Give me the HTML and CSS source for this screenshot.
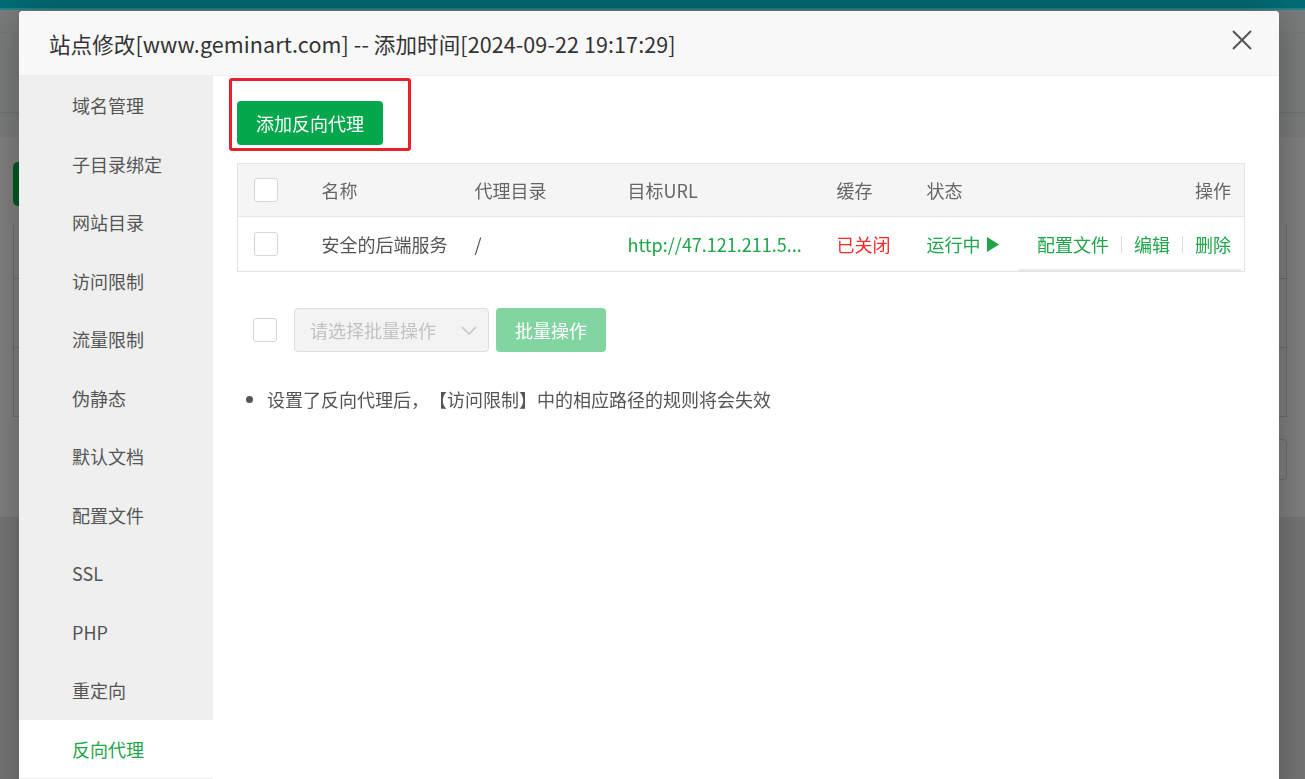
FILE: index.html
```html
<!DOCTYPE html>
<html lang="zh-CN">
<head>
<meta charset="utf-8">
<title>站点修改</title>
<link rel="stylesheet" href="styles.css">
</head>
<body>
<div class="page">
  <div class="topbar"></div>
  <div class="page-head">
    <div class="head-line"></div>
  </div>
  <div class="page-panel">
    <div class="bg-btn"></div>
    <div class="bg-table">
      <div class="bg-row bg-row-head"><span class="bg-text">三:</span></div>
      <div class="bg-row"><span class="bg-green">36</span></div>
      <div class="bg-row"><span class="bg-green">36</span></div>
    </div>
    <div class="bg-input"></div>
  </div>
</div>

<div class="modal">
  <div class="modal-head">
    <div class="modal-title">站点修改[www.geminart.com] -- 添加时间[2024-09-22 19:17:29]</div>
    <svg class="modal-close" width="20" height="20" viewBox="0 0 20 20"><path d="M1 1L19 19M19 1L1 19" stroke="#555" stroke-width="2" fill="none"/></svg>
  </div>
  <div class="modal-body">
    <ul class="side">
      <li class="side-item">域名管理</li>
      <li class="side-item">子目录绑定</li>
      <li class="side-item">网站目录</li>
      <li class="side-item">访问限制</li>
      <li class="side-item">流量限制</li>
      <li class="side-item">伪静态</li>
      <li class="side-item">默认文档</li>
      <li class="side-item">配置文件</li>
      <li class="side-item">SSL</li>
      <li class="side-item">PHP</li>
      <li class="side-item">重定向</li>
      <li class="side-item active">反向代理</li>
    </ul>
    <div class="content">
      <div class="mark-box"></div>
      <button class="btn-add">添加反向代理</button>
      <table class="proxy-table">
        <thead>
          <tr>
            <th class="col-check"><span class="checkbox"></span></th>
            <th class="col-name">名称</th>
            <th class="col-dir">代理目录</th>
            <th class="col-url">目标URL</th>
            <th class="col-cache">缓存</th>
            <th class="col-state">状态</th>
            <th class="col-op">操作</th>
          </tr>
        </thead>
        <tbody>
          <tr>
            <td class="col-check"><span class="checkbox"></span></td>
            <td class="col-name">安全的后端服务</td>
            <td class="col-dir">/</td>
            <td class="col-url"><span class="link-green">http://47.121.211.5...</span></td>
            <td class="col-cache"><span class="text-red">已关闭</span></td>
            <td class="col-state"><span class="link-green state">运行中<svg class="play" width="12" height="15" viewBox="0 0 12 15"><polygon points="0,0 12,7.5 0,15" fill="#1ea548"/></svg></span></td>
            <td class="col-op">
              <div class="op-wrap">
                <span class="link-green">配置文件</span><span class="sep"></span><span class="link-green">编辑</span><span class="sep"></span><span class="link-green">删除</span>
              </div>
            </td>
          </tr>
        </tbody>
      </table>
      <div class="batch">
        <span class="checkbox"></span>
        <div class="batch-select">
          <span>请选择批量操作</span>
          <svg width="16" height="9" viewBox="0 0 16 9"><polyline points="1,1 8,8 15,1" stroke="#c4c4c4" stroke-width="1.5" fill="none"/></svg>
        </div>
        <button class="btn-batch">批量操作</button>
      </div>
      <ul class="notes">
        <li>设置了反向代理后，【访问限制】中的相应路径的规则将会失效</li>
      </ul>
    </div>
  </div>
</div>
</body>
</html>
```

FILE: styles.css
```css
* { box-sizing: border-box; }
html, body { margin: 0; padding: 0; }
body {
  width: 1305px;
  height: 779px;
  overflow: hidden;
  background: #767676;
  font-family: "Noto Sans CJK SC", "Noto Sans", sans-serif;
  text-spacing-trim: space-all;
}

/* dimmed background page */
.page { width: 100%; }
.topbar {
  height: 10px;
  background: #006d77;
  border-bottom: 2px solid #22878d;
}
.page-head {
  height: 127px;
  background: #7a7d7c;
  padding-top: 22px;
}
.head-line {
  height: 81px;
  border-top: 1px solid #767978;
  border-bottom: 1px solid #727272;
}
.page-panel {
  height: 380px;
  background: #808080;
  padding: 25px 18px 0 13px;
}
.bg-btn {
  width: 60px;
  height: 44px;
  border-radius: 5px;
  background: #005a24;
}
.bg-table {
  margin-top: 19px;
  border-left: 1px solid #6c6c6c;
  border-right: 1px solid #6c6c6c;
}
.bg-row {
  height: 69px;
  border-bottom: 1px solid #6c6c6c;
  display: flex;
  justify-content: flex-end;
  align-items: center;
  padding-right: 10px;
  font-size: 18px;
}
.bg-row-head { height: 54px; }
.bg-text { color: #333; }
.bg-green { color: #0a5a28; font-weight: bold; }
.bg-input {
  margin: 22px 0 0 auto;
  width: 40px;
  height: 41px;
  border: 1px solid #6c6c6c;
  border-radius: 4px;
}

/* modal */
.modal {
  position: fixed;
  left: 19px;
  top: 11px;
  width: 1260px;
  height: 800px;
  background: #fff;
  border-radius: 4px 4px 0 0;
  box-shadow: 1px 1px 40px rgba(0, 0, 0, 0.3);
  overflow: hidden;
  display: flex;
  flex-direction: column;
}
.modal-head {
  height: 65px;
  flex: none;
  background: #f8f8f8;
  border-bottom: 1px solid #eee;
  display: flex;
  align-items: center;
  justify-content: space-between;
  padding: 0 27px 0 30px;
}
.modal-title {
  font-size: 21.5px;
  color: #333;
  letter-spacing: 0.1px;
}
.modal-close { display: block; margin-top: -6px; }

.modal-body {
  flex: 1;
  display: flex;
}
.side {
  width: 194px;
  flex: none;
  background: #efefef;
  margin: 0;
  padding: 0;
  list-style: none;
}
.side-item {
  height: 58.5px;
  display: flex;
  align-items: center;
  padding-left: 53px;
  font-size: 18px;
  color: #555;
}
.side-item.active {
  background: #fff;
  color: #1ea548;
}

.content {
  flex: 1;
  position: relative;
  padding: 25px 34px 0 24px;
}
.mark-box {
  position: absolute;
  left: 16px;
  top: 2px;
  width: 182px;
  height: 73px;
  border: 3px solid #e8202a;
  border-radius: 3px;
}
.btn-add {
  display: block;
  height: 44px;
  width: 146px;
  padding: 0;
  border: none;
  border-radius: 4px;
  background: #04a74c;
  color: #fff;
  font-family: inherit;
  font-size: 18px;
}

.proxy-table {
  margin-top: 18px;
  width: 100%;
  border-collapse: collapse;
  border: 1px solid #e2e2e2;
  font-size: 18px;
  table-layout: fixed;
}
.proxy-table th {
  height: 53px;
  background: #f5f5f5;
  color: #666;
  font-weight: normal;
  text-align: left;
  padding: 0 0 0 16px;
  border-bottom: 1px solid #e6e6e6;
}
.proxy-table td {
  height: 54px;
  color: #555;
  padding: 0 0 0 16px;
  white-space: nowrap;
}
.proxy-table .col-check { width: 68px; }
.proxy-table .col-name { width: 153px; }
.proxy-table .col-dir { width: 153px; }
.proxy-table .col-url { width: 209px; }
.proxy-table .col-cache { width: 90px; }
.proxy-table .col-state { width: 100px; }
.proxy-table th.col-op { text-align: right; padding-right: 13px; }
.proxy-table td.col-op { padding: 0 3px 0 7px; }
.op-wrap {
  height: 52px;
  display: flex;
  align-items: center;
  justify-content: flex-end;
  padding-right: 10px;
  border-bottom: 2px solid #ececec;
  margin-top: 2px;
}

.checkbox {
  display: block;
  width: 24px;
  height: 24px;
  border: 1px solid #d6d6d6;
  border-radius: 3px;
  background: #fff;
}
.link-green { color: #1ea548; }
.text-red { color: #f52a2a; }
.state { display: inline-flex; align-items: center; }
.play { margin-left: 6px; }
.sep {
  display: inline-block;
  width: 1px;
  height: 17px;
  background: #ddd;
  margin: 0 12px;
}

.batch {
  margin-top: 36px;
  display: flex;
  align-items: center;
  padding-left: 16px;
}
.batch-select {
  margin-left: 17px;
  width: 195px;
  height: 44px;
  border: 1px solid #ddd;
  border-radius: 4px;
  background: #f3f3f3;
  display: flex;
  align-items: center;
  justify-content: space-between;
  padding: 0 11px 0 15px;
  font-size: 18px;
  color: #c2c2c2;
}
.btn-batch {
  margin-left: 7px;
  width: 110px;
  height: 44px;
  padding: 0;
  border: none;
  border-radius: 4px;
  background: #82d4a0;
  color: #fff;
  font-family: inherit;
  font-size: 18px;
}

.notes {
  margin: 28px 0 0;
  padding-left: 30px;
  font-size: 18px;
  color: #555;
  line-height: 38px;
}
```
